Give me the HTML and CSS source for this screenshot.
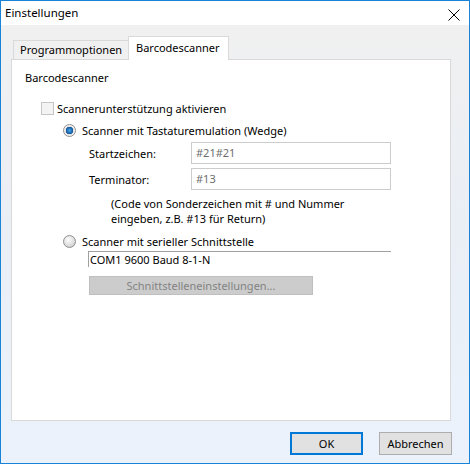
FILE: index.html
```html
<!DOCTYPE html>
<html lang="de">
<head>
    <meta charset="UTF-8">
    <title>Einstellungen</title>
    <link rel="stylesheet" href="styles.css">
</head>
<body>

    <div class="dialog">
        <!-- Title bar -->
        <div class="titlebar">
            <span class="title">Einstellungen</span>
            <svg class="close" width="12" height="12" viewBox="0 0 12 12">
                <path d="M0.5 0.5 L11.5 11.5 M11.5 0.5 L0.5 11.5" stroke="#000" stroke-width="1" fill="none"/>
            </svg>
        </div>

        <div class="client">
            <!-- Tabs -->
            <div class="tabs">
                <div class="tab">Programmoptionen</div>
                <div class="tab active">Barcodescanner</div>
            </div>

            <div class="panel">
                <div class="heading">Barcodescanner</div>

                <div class="row check-row">
                    <span class="checkbox"></span>
                    <span class="label">Scannerunterstützung aktivieren</span>
                </div>

                <div class="row radio-row first">
                    <span class="radio checked"></span>
                    <span class="label">Scanner mit Tastaturemulation (Wedge)</span>
                </div>

                <div class="field">
                    <span class="field-label">Startzeichen:</span>
                    <div class="input">#21#21</div>
                </div>
                <div class="field">
                    <span class="field-label">Terminator:</span>
                    <div class="input">#13</div>
                </div>

                <div class="note">
                    (Code von Sonderzeichen mit # und Nummer<br>
                    eingeben, z.B. #13 für Return)
                </div>

                <div class="row radio-row second">
                    <span class="radio"></span>
                    <span class="label">Scanner mit serieller Schnittstelle</span>
                </div>

                <div class="port">COM1 9600 Baud 8-1-N</div>

                <div class="btn-disabled">Schnittstelleneinstellungen...</div>
            </div>

            <!-- Dialog buttons -->
            <div class="buttons">
                <div class="btn default">OK</div>
                <div class="btn">Abbrechen</div>
            </div>
        </div>
    </div>

</body>
</html>
```

FILE: styles.css
```css
body {
    margin: 0;
    font-family: "Noto Sans", sans-serif;
    font-size: 11px;
    color: #000;
}

.dialog {
    width: 468px;
    height: 462px;
    border: 1px solid #1883d7;
    display: flex;
    flex-direction: column;
}

.titlebar {
    height: 24px;
    background-color: #fff;
    display: flex;
    align-items: center;
    justify-content: space-between;
    padding: 0 9px 0 4px;
    font-size: 11.5px;
}

.title {
    margin-top: -1px;
}

.close {
    margin-top: 4px;
}

.client {
    flex: 1;
    background: linear-gradient(#f0f0f0, #eaeff6 45%, #ebf2fb);
    padding: 11px 0 0 10px;
}

.tabs {
    display: flex;
    align-items: flex-end;
    height: 23px;
    padding-left: 2px;
}

.tab {
    height: 18px;
    line-height: 18px;
    padding: 0 6px 0 6px;
    border: 1px solid #d9d9d9;
    border-bottom: none;
    background-color: #f0f0f0;
    width: 102px;
}

.tab.active {
    position: relative;
    z-index: 1;
    width: 86px;
    height: 23px;
    line-height: 21px;
    margin-bottom: -1px;
    margin-left: -1px;
    padding: 0 6px 0 7px;
    background-color: #fff;
}

.panel {
    width: 438px;
    height: 360px;
    border: 1px solid #d9d9d9;
    background-color: #fff;
    padding: 10px 0 0 13px;
    box-sizing: content-box;
    width: 425px;
    height: 350px;
}

.heading {
    height: 16px;
    line-height: 16px;
}

.row {
    display: flex;
    align-items: center;
    height: 16px;
}

.check-row {
    margin: 14px 0 0 16px;
}

.checkbox {
    width: 11px;
    height: 11px;
    border: 1px solid #c6c6c6;
    background-color: #f3f3f3;
    margin-right: 3px;
}

.radio-row {
    margin-left: 38px;
}

.radio-row.first {
    margin-top: 6px;
}

.radio-row.second {
    margin-top: 7px;
}

.radio {
    width: 11px;
    height: 11px;
    border-radius: 50%;
    border: 1px solid #8f8f8f;
    background: radial-gradient(circle at 40% 35%, #fdfdfd, #d6d6d6 70%, #c4c4c4);
    margin-right: 6px;
}

.radio.checked {
    background: radial-gradient(circle, #49a6e6 0, #1e6fb8 2.5px, #16558e 3.5px, #e2e2e2 4px, #f6f6f6 5.5px);
}

.field {
    display: flex;
    align-items: center;
    margin: 4px 0 0 64px;
    height: 22px;
}

.field:first-of-type {
    margin-top: 4px;
}

.field-label {
    width: 102px;
}

.input {
    width: 194px;
    height: 20px;
    line-height: 20px;
    border: 1px solid #cccccc;
    padding-left: 4px;
    color: #6d6d6d;
}

.note {
    margin: 6px 0 0 86px;
    line-height: 15px;
}

.port {
    margin: 2px 0 0 63px;
    width: 301px;
    height: 15px;
    line-height: 15px;
    border-top: 1px solid #a0a0a0;
    border-left: 1px solid #a0a0a0;
    padding-left: 1px;
}

.btn-disabled {
    margin: 9px 0 0 64px;
    width: 222px;
    height: 17px;
    line-height: 17px;
    border: 1px solid #bfbfbf;
    background-color: #cccccc;
    color: #838383;
    text-align: center;
}

.buttons {
    display: flex;
    justify-content: flex-end;
    gap: 16px;
    padding-right: 17px;
    margin-top: 11px;
}

.btn {
    width: 71px;
    height: 21px;
    line-height: 21px;
    border: 1px solid #adadad;
    background-color: #e1e1e1;
    text-align: center;
}

.btn.default {
    width: 69px;
    height: 19px;
    line-height: 19px;
    border: 2px solid #0078d7;
}
```
